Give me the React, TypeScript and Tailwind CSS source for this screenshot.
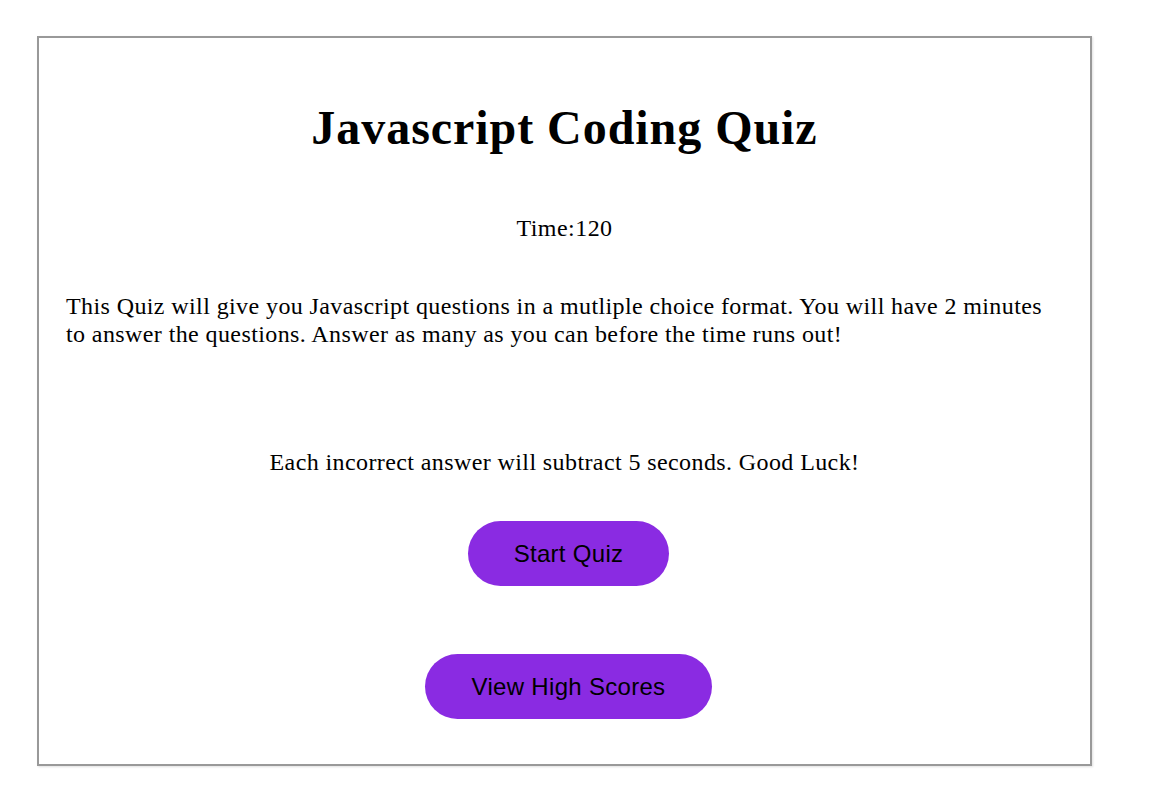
import React from "react";

export default function App() {
  return (
    <div className="min-h-screen bg-white pt-[36px] pl-[37px]" style={{ fontFamily: '"Liberation Serif", "Times New Roman", serif' }}>
      <div className="w-[1055px] h-[730px] border-2 border-[#999999] shadow-[1px_1px_2px_#e0e0e0] px-[27px] flex flex-col text-black">
        <h1 className="mt-[62px] text-center text-[48px] leading-[55px] font-bold tracking-[0.95px]">Javascript Coding Quiz</h1>
        <p className="mt-[59px] text-center text-[24px] leading-[28px] tracking-[0.45px]">Time:120</p>
        <p className="mt-[50px] text-[24px] leading-[28px] tracking-[0.4px]">
          This Quiz will give you Javascript questions in a mutliple choice format. You will have 2 minutes to answer the questions. Answer as many as you can before the time runs out!
        </p>
        <p className="mt-[100px] text-center text-[24px] leading-[28px] tracking-[0.4px]">Each incorrect answer will subtract 5 seconds. Good Luck!</p>
        <div className="flex flex-col items-center ml-2" style={{ fontFamily: '"Liberation Sans", Arial, sans-serif' }}>
          <button className="mt-[45px] h-[65px] w-[201px] rounded-full bg-[#8a2be2] text-black text-[24px] leading-[28px] tracking-[0.3px]">Start Quiz</button>
          <button className="mt-[68px] h-[65px] w-[287px] rounded-full bg-[#8a2be2] text-black text-[24px] leading-[28px] tracking-[0.3px]">View High Scores</button>
        </div>
      </div>
    </div>
  );
}
